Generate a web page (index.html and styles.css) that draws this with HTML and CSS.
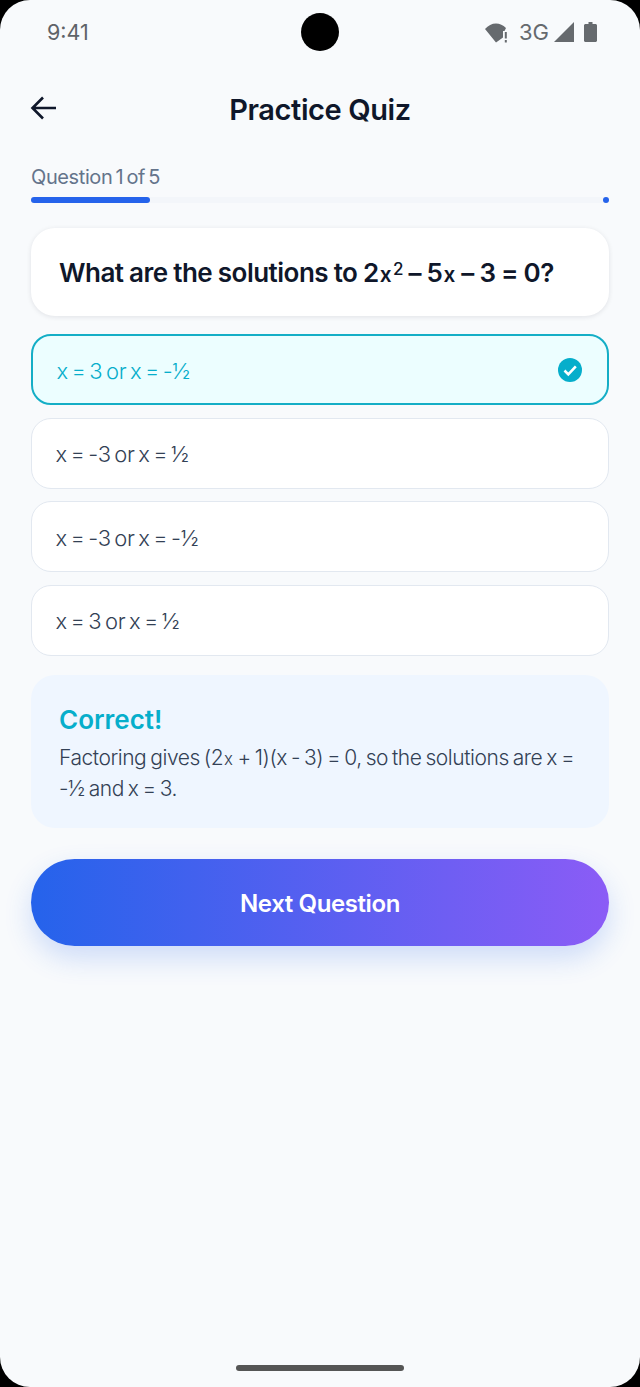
FILE: index.html
```html
<!DOCTYPE html>
<html lang="en">
<head>
  <meta charset="UTF-8" />
  <meta name="viewport" content="width=device-width, initial-scale=1.0"/>
  <title>Practice Quiz</title>
  <link rel="stylesheet" href="styles.css">
</head>
<body>
  <div class="screen">

    <!-- Status bar -->
    <div class="status-bar">
      <span class="status-time">9:41</span>
      <span class="camera"></span>
      <div class="status-icons">
        <svg width="23" height="21" viewBox="0 0 23 21">
          <path d="M0 7C3 3.500 7 1.500 11 1.500c3.800 0 7 1.500 10 4.500l-1.500 3H18V15.500L11 20.500z" fill="#666a6e"/>
          <rect x="19.800" y="10" width="2" height="6.500" fill="#666a6e"/>
          <rect x="19.800" y="18" width="2" height="2.500" fill="#666a6e"/>
        </svg>
        <span class="status-net">3G</span>
        <svg width="20" height="20" viewBox="0 0 20 20">
          <path d="M20 0V20H0z" fill="#666a6e"/>
        </svg>
        <svg class="icon-battery" width="13" height="20" viewBox="0 0 13 20">
          <path d="M4.500 0h4v2h3c.8 0 1.500.7 1.500 1.500V18.500c0 .8-.7 1.500-1.500 1.500h-10C.7 20 0 19.300 0 18.500V3.500C0 2.700.7 2 1.500 2h3z" fill="#666a6e"/>
        </svg>
      </div>
    </div>

    <!-- Header -->
    <div class="top-bar">
      <svg class="back-icon" width="28" height="28" viewBox="0 0 28 28">
        <path d="M26 14H3M13 3.500 2.500 14 13 24.500" fill="none" stroke="#0f172a" stroke-width="2.600"/>
      </svg>
      <h1>Practice Quiz</h1>
    </div>

    <main class="content">
      <!-- Progress -->
      <p class="progress-label">Question 1 of 5</p>
      <div class="progress-track">
        <div class="progress-fill"></div>
        <span class="progress-dot"></span>
      </div>

      <!-- Question -->
      <div class="question-card">
        <span>What are the solutions to 2<span class="small-x">x</span><sup>2</sup> – 5<span class="small-x">x</span> – 3 = 0?</span>
      </div>

      <!-- Answers -->
      <div class="answer-list">
        <div class="answer selected">
          <span>x = 3 or x = -½</span>
          <svg width="26" height="26" viewBox="0 0 26 26">
            <circle cx="13" cy="13" r="12" fill="#06aecb"/>
            <path d="M7.500 13.500 11.300 17.300 18.800 9.300" fill="none" stroke="#fff" stroke-width="2.600"/>
          </svg>
        </div>
        <div class="answer"><span>x = -3 or x = ½</span></div>
        <div class="answer"><span>x = -3 or x = -½</span></div>
        <div class="answer"><span>x = 3 or x = ½</span></div>
      </div>

      <!-- Feedback -->
      <div class="feedback">
        <h2>Correct!</h2>
        <p>Factoring gives (2<span class="small-x">x</span> + 1)(x - 3) = 0, so the solutions are x =<br>-½ and x = 3.</p>
      </div>

      <button class="next-btn">Next Question</button>
    </main>

    <div class="home-bar"></div>
  </div>
</body>
</html>
```

FILE: styles.css
```css
/* Page base */
* {
  box-sizing: border-box;
}

html, body {
  margin: 0;
  background: #000;
}

body {
  font-family: Inter, "Open Sans", sans-serif;
  color: #0f172a;
}

.screen {
  width: 640px;
  height: 1387px;
  background: #f8fafc;
  border-radius: 30px;
  overflow: hidden;
  display: flex;
  flex-direction: column;
}

/* Status bar */
.status-bar {
  height: 64px;
  padding: 0 43px 0 47px;
  display: flex;
  align-items: center;
  justify-content: space-between;
  position: relative;
}

.status-time {
  font-size: 21.500px;
  color: #5f6368;
}

.camera {
  position: absolute;
  left: 301px;
  top: 13px;
  width: 38px;
  height: 38px;
  border-radius: 50%;
  background: #000;
}

.status-icons {
  display: flex;
  align-items: center;
  gap: 4px;
}

.status-net {
  font-size: 22px;
  color: #666a6e;
  margin-left: 7px;
  margin-right: 1px;
}

.icon-battery {
  margin-left: 6px;
}

/* Header */
.top-bar {
  height: 90px;
  padding: 0 31px;
  display: flex;
  align-items: center;
  justify-content: center;
  position: relative;
}

.back-icon {
  position: absolute;
  left: 30px;
  top: 30px;
}

.top-bar h1 {
  margin: 0;
  font-size: 29px;
  font-weight: 600;
  letter-spacing: -0.4px;
}

/* Main column */
.content {
  padding: 0 31px;
  display: flex;
  flex-direction: column;
}

.progress-label {
  margin: 10px 0 7px;
  font-size: 20px;
  line-height: 26px;
  color: #64748b;
  letter-spacing: -0.4px;
  word-spacing: -2px;
}

.progress-track {
  height: 6px;
  border-radius: 3px;
  background: #f3f6fa;
  position: relative;
}

.progress-fill {
  width: 119px;
  height: 6px;
  border-radius: 3px;
  background: #2563eb;
}

.progress-dot {
  position: absolute;
  right: 0;
  top: 0;
  width: 6px;
  height: 6px;
  border-radius: 50%;
  background: #2563eb;
}

/* Question card */
.question-card {
  margin-top: 25px;
  height: 88px;
  padding: 0 28px;
  display: flex;
  align-items: center;
  background: #fff;
  border-radius: 24px;
  box-shadow: 0 1px 5px rgba(15, 23, 42, 0.1);
  font-size: 26px;
  font-weight: 600;
  letter-spacing: -0.5px;
  word-spacing: -0.5px;
}

.question-card sup {
  font-size: 17px;
  line-height: 0;
  font-weight: 500;
  vertical-align: 7px;
  margin-left: 1px;
}

.small-x {
  font-size: 0.8em;
  line-height: 0;
  margin: 0 1px;
}

/* Answers */
.answer-list {
  margin-top: 18px;
  display: flex;
  flex-direction: column;
  gap: 12.600px;
}

.answer {
  height: 71px;
  padding: 2px 23.500px 0;
  display: flex;
  align-items: center;
  justify-content: space-between;
  background: #fff;
  border: 1.500px solid #e2e8f0;
  border-radius: 20px;
  font-size: 22px;
  font-weight: 300;
  color: #334155;
  letter-spacing: -0.4px;
  word-spacing: -2px;
}

.answer svg {
  margin: -2px 1px 0 0;
}

.answer.selected {
  background: #ecfeff;
  border: 2px solid #14aec6;
  color: #06aecb;
}

/* Feedback box */
.feedback {
  margin-top: 19px;
  padding: 27px 28px 24px;
  background: #eff6ff;
  border-radius: 24px;
}

.feedback h2 {
  margin: 0;
  font-size: 26px;
  line-height: 36px;
  font-weight: 600;
  color: #06aecb;
}

.feedback p {
  margin: 4px 0 0;
  font-size: 21px;
  line-height: 31px;
  font-weight: 300;
  color: #334155;
  letter-spacing: -0.45px;
  word-spacing: -1.500px;
}

/* Next button */
.next-btn {
  margin-top: 31px;
  height: 87px;
  padding-top: 3px;
  border: none;
  border-radius: 44px;
  background: linear-gradient(90deg, #2563eb, #8b5cf6);
  box-shadow: 0 12px 28px rgba(37, 99, 235, 0.2);
  color: #fff;
  font-family: inherit;
  font-size: 24px;
  font-weight: 600;
  letter-spacing: -0.4px;
}

/* Gesture bar */
.home-bar {
  width: 168px;
  height: 6px;
  margin: auto auto 16px;
  border-radius: 3px;
  background: #555;
}
```
